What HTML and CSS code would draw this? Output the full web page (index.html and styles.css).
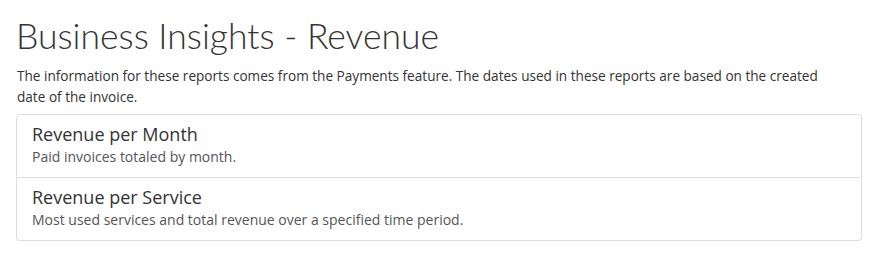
FILE: index.html
```html
<!DOCTYPE html>
<html lang="en">
  <head>
    <meta charset="UTF-8" />
    <meta name="viewport" content="width=device-width, initial-scale=1.0" />
    <title>Business Insights - Revenue</title>
    <link rel="stylesheet" href="styles.css">
  </head>
  <body>
    <div class="page">
      <h1>Business Insights - Revenue</h1>
      <p class="intro">
        The information for these reports comes from the Payments feature. The dates used in these reports are based on the created
        date of the invoice.
      </p>
      <div class="report-list">
        <a class="report" href="#">
          <div class="report-title">Revenue per Month</div>
          <div class="report-desc">Paid invoices totaled by month.</div>
        </a>
        <a class="report" href="#">
          <div class="report-title">Revenue per Service</div>
          <div class="report-desc">Most used services and total revenue over a specified time period.</div>
        </a>
      </div>
    </div>
  </body>
</html>
```

FILE: styles.css
```css
body {
  font-family: "Open Sans", Arial, sans-serif;
  background-color: #fff;
  color: #333;
  margin: 0;
}
.page {
  padding: 14px 21px 0 16px;
}
h1 {
  font-family: Lato, "Open Sans", sans-serif;
  font-weight: 300;
  font-size: 35.5px;
  line-height: 44px;
  color: #333;
  margin: 0 0 7px 0;
}
.intro {
  font-size: 13.6px;
  line-height: 21px;
  margin: 0 0 7px 1px;
  max-width: 830px;
}
.report-list {
  border: 1px solid #ddd;
  border-radius: 4px;
  box-shadow: 0 1px 2px rgba(0, 0, 0, 0.06);
}
.report {
  display: block;
  padding: 7px 15px 10px;
  color: #333;
  text-decoration: none;
}
.report + .report {
  border-top: 1px solid #ddd;
}
.report-title {
  font-size: 18px;
  line-height: 25px;
}
.report-desc {
  font-size: 14px;
  line-height: 20px;
  color: #555;
}
```
